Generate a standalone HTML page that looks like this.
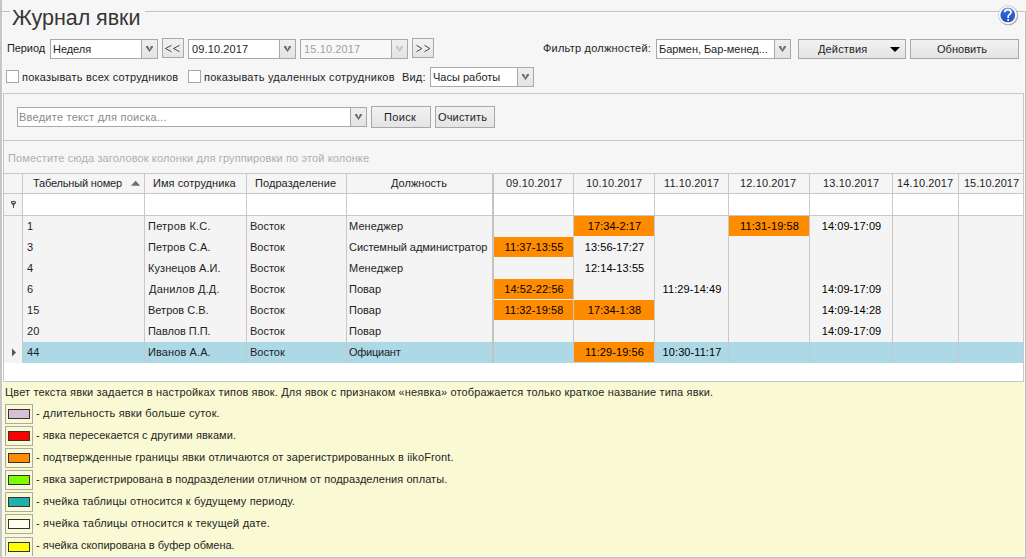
<!DOCTYPE html>
<html><head><meta charset="utf-8"><title>Журнал явки</title>
<style>
*{margin:0;padding:0;box-sizing:border-box}
html,body{width:1026px;height:558px;overflow:hidden;background:#f6f6f6;font-family:"Liberation Sans",sans-serif;font-size:11px;color:#1e1e1e}
.a{position:absolute}
.t{position:absolute;white-space:nowrap;font-size:11px;line-height:11px;letter-spacing:0.15px}
</style></head><body>
<div class="a" style="left:0px;top:0px;width:2px;height:558px;background:#c6c6c6"></div>
<div class="a" style="left:2px;top:12px;width:1px;height:545px;background:#fafafa"></div>
<div class="a" style="left:1px;top:11px;width:9px;height:1px;background:#c0c0c0"></div>
<div class="a" style="left:145px;top:11px;width:881px;height:1px;background:#c0c0c0"></div>
<div class="a" style="left:3px;top:12px;width:7px;height:1px;background:#fafafa"></div>
<div class="a" style="left:145px;top:12px;width:879px;height:1px;background:#fafafa"></div>
<div class="a" style="left:1025px;top:11px;width:1px;height:547px;background:#c0c0c0"></div>
<div class="a" style="left:1024px;top:12px;width:1px;height:545px;background:#fafafa"></div>
<div class="a" style="left:0px;top:557px;width:1026px;height:1px;background:#c0c0c0"></div>
<div class="a" style="left:2px;top:556px;width:1023px;height:1px;background:#fafafa"></div>
<div class="a" style="left:12px;top:7px;font-size:21.5px;line-height:22px;letter-spacing:-0.05px;color:#363636;white-space:nowrap">Журнал явки</div>
<svg class="a" style="left:997px;top:3px" width="24" height="24" viewBox="0 0 24 24">
<defs><linearGradient id="hg" x1="0" y1="0" x2="0" y2="1"><stop offset="0" stop-color="#6a9cec"/><stop offset="0.35" stop-color="#2f63d2"/><stop offset="1" stop-color="#2352c0"/></linearGradient></defs>
<circle cx="11.4" cy="12.5" r="9.8" fill="#6e6e6e" opacity="0.55"/>
<circle cx="10.8" cy="11.9" r="9.6" fill="#c8c8c8"/>
<circle cx="10.8" cy="11.9" r="9.0" fill="#ffffff"/>
<circle cx="10.8" cy="11.9" r="7.4" fill="url(#hg)"/>
<path d="M7.7 9.3 C7.7 7.4 9.1 6.6 10.8 6.6 C12.6 6.6 14 7.6 14 9.2 C14 11.1 11.5 11.5 11.2 13.3 L11.2 14.9" fill="none" stroke="#fff" stroke-width="1.7"/>
<rect x="10.3" y="16.1" width="1.8" height="1.8" fill="#fff"/>
</svg>
<div class="t" style="left:7px;top:43px;letter-spacing:-0.1px;">Период</div>
<div class="a" style="left:50px;top:39px;width:108px;height:20px;border:1px solid #a8a8a8;background:#fff"></div>
<div class="a" style="left:141px;top:40px;width:16px;height:18px;border-left:1px solid #a8a8a8;background:linear-gradient(#efefef,#e3e3e3)"></div>
<svg class="a" width="7" height="6" viewBox="0 0 7 6" style="left:146px;top:46px"><path d="M0 0 L2.1 0 L3.5 3.5 L4.9 0 L7 0 L7 1.2 L3.5 6 L0 1.2 Z" fill="#6e6e6e"/></svg>
<div class="t" style="left:53px;top:44px;letter-spacing:-0.05px;">Неделя</div>
<div class="a" style="left:162px;top:38px;width:22px;height:20px;border:1px solid #a8a8a8;background:linear-gradient(#f2f2f2,#e4e4e4)"></div>
<svg class="a" style="left:162px;top:38px" width="22" height="20" viewBox="0 0 22 20"><path d="M9.5 7.3 L3.5 10.5 L9.5 13.7 M17.5 7.3 L11.5 10.5 L17.5 13.7" fill="none" stroke="#2a2a2a" stroke-width="0.85"/></svg>
<div class="a" style="left:188px;top:39px;width:108px;height:20px;border:1px solid #a8a8a8;background:#fff"></div>
<div class="a" style="left:279px;top:40px;width:16px;height:18px;border-left:1px solid #a8a8a8;background:linear-gradient(#efefef,#e3e3e3)"></div>
<svg class="a" width="7" height="6" viewBox="0 0 7 6" style="left:284px;top:46px"><path d="M0 0 L2.1 0 L3.5 3.5 L4.9 0 L7 0 L7 1.2 L3.5 6 L0 1.2 Z" fill="#6e6e6e"/></svg>
<div class="t" style="left:192px;top:44px;letter-spacing:0.125px;">09.10.2017</div>
<div class="a" style="left:300px;top:39px;width:108px;height:20px;border:1px solid #a8a8a8;background:#f8f8f8"></div>
<div class="a" style="left:391px;top:40px;width:16px;height:18px;border-left:1px solid #a8a8a8;background:linear-gradient(#efefef,#e3e3e3)"></div>
<svg class="a" width="7" height="6" viewBox="0 0 7 6" style="left:396px;top:46px"><path d="M0 0 L2.1 0 L3.5 3.5 L4.9 0 L7 0 L7 1.2 L3.5 6 L0 1.2 Z" fill="#c4c4c4"/></svg>
<div class="t" style="left:304px;top:44px;letter-spacing:0.125px;color:#a0a0a0">15.10.2017</div>
<div class="a" style="left:412px;top:38px;width:22px;height:20px;border:1px solid #a8a8a8;background:linear-gradient(#f2f2f2,#e4e4e4)"></div>
<svg class="a" style="left:412px;top:38px" width="22" height="20" viewBox="0 0 22 20"><path d="M4.5 7.3 L9.8 10.5 L4.5 13.7 M12.5 7.3 L17.8 10.5 L12.5 13.7" fill="none" stroke="#2a2a2a" stroke-width="0.85"/></svg>
<div class="t" style="left:543px;top:43px;letter-spacing:0.225px;">Фильтр должностей:</div>
<div class="a" style="left:656px;top:39px;width:135px;height:20px;border:1px solid #a8a8a8;background:#fff"></div>
<div class="a" style="left:774px;top:40px;width:16px;height:18px;border-left:1px solid #a8a8a8;background:linear-gradient(#efefef,#e3e3e3)"></div>
<svg class="a" width="7" height="6" viewBox="0 0 7 6" style="left:779px;top:46px"><path d="M0 0 L2.1 0 L3.5 3.5 L4.9 0 L7 0 L7 1.2 L3.5 6 L0 1.2 Z" fill="#6e6e6e"/></svg>
<div class="t" style="left:659px;top:44px;letter-spacing:-0.05px;">Бармен, Бар-менед...</div>
<div class="a" style="left:798px;top:39px;width:108px;height:20px;border:1px solid #a8a8a8;background:linear-gradient(#f2f2f2,#e4e4e4)"></div>
<div class="t" style="left:818px;top:44px;letter-spacing:0.15px;">Действия</div>
<svg class="a" style="left:889px;top:46px" width="12" height="7" viewBox="0 0 12 7"><path d="M1 1 L11 1 L6 6 Z" fill="#000"/></svg>
<div class="a" style="left:910px;top:39px;width:109px;height:20px;border:1px solid #a8a8a8;background:linear-gradient(#f2f2f2,#e4e4e4)"></div>
<div class="t" style="left:937px;top:44px;letter-spacing:0.025px;">Обновить</div>
<div class="a" style="left:6px;top:70px;width:13px;height:13px;border:1px solid #a8a8a8;background:#fff"></div>
<div class="t" style="left:22px;top:72px;letter-spacing:0.225px;">показывать всех сотрудников</div>
<div class="a" style="left:188px;top:70px;width:13px;height:13px;border:1px solid #a8a8a8;background:#fff"></div>
<div class="t" style="left:204px;top:72px;letter-spacing:0.225px;">показывать удаленных сотрудников</div>
<div class="t" style="left:402px;top:72px;letter-spacing:0.175px;">Вид:</div>
<div class="a" style="left:430px;top:67px;width:104px;height:20px;border:1px solid #a8a8a8;background:#fff"></div>
<div class="a" style="left:517px;top:68px;width:16px;height:18px;border-left:1px solid #a8a8a8;background:linear-gradient(#efefef,#e3e3e3)"></div>
<svg class="a" width="7" height="6" viewBox="0 0 7 6" style="left:522px;top:74px"><path d="M0 0 L2.1 0 L3.5 3.5 L4.9 0 L7 0 L7 1.2 L3.5 6 L0 1.2 Z" fill="#6e6e6e"/></svg>
<div class="t" style="left:433px;top:72px;letter-spacing:0.0px;">Часы работы</div>
<div class="a" style="left:3px;top:93px;width:1021px;height:48px;border:1px solid #c8c8c8;background:#f6f6f6"></div>
<div class="a" style="left:17px;top:107px;width:350px;height:20px;border:1px solid #a8a8a8;background:#fff"></div>
<div class="a" style="left:350px;top:108px;width:16px;height:18px;border-left:1px solid #a8a8a8;background:linear-gradient(#efefef,#e3e3e3)"></div>
<svg class="a" width="7" height="6" viewBox="0 0 7 6" style="left:355px;top:114px"><path d="M0 0 L2.1 0 L3.5 3.5 L4.9 0 L7 0 L7 1.2 L3.5 6 L0 1.2 Z" fill="#6e6e6e"/></svg>
<div class="t" style="left:19px;top:112px;letter-spacing:0.25px;color:#8a8a8a">Введите текст для поиска...</div>
<div class="a" style="left:371px;top:106px;width:60px;height:22px;border:1px solid #a8a8a8;background:linear-gradient(#f2f2f2,#e4e4e4)"></div>
<div class="t" style="left:384px;top:112px;letter-spacing:0.325px;">Поиск</div>
<div class="a" style="left:435px;top:106px;width:60px;height:22px;border:1px solid #a8a8a8;background:linear-gradient(#f2f2f2,#e4e4e4)"></div>
<div class="t" style="left:438px;top:112px;letter-spacing:0.15px;">Очистить</div>
<div class="a" style="left:3px;top:141px;width:1px;height:32px;background:#c8c8c8"></div>
<div class="a" style="left:1023px;top:141px;width:1px;height:32px;background:#c8c8c8"></div>
<div class="t" style="left:8px;top:153px;letter-spacing:0.125px;color:#acaeb4">Поместите сюда заголовок колонки для группировки по этой колонке</div>
<div class="a" style="left:3px;top:173px;width:1021px;height:209px;border:1px solid #c8c8c8;background:#fff"></div>
<div class="a" style="left:4px;top:174px;width:1019px;height:19px;background:#f5f5f5"></div>
<div class="a" style="left:4px;top:193px;width:1019px;height:1px;background:#c8c8c8"></div>
<div class="a" style="left:4px;top:194px;width:18px;height:21px;background:#f5f5f5"></div>
<div class="a" style="left:4px;top:215px;width:1019px;height:1px;background:#c8c8c8"></div>
<div class="a" style="left:4px;top:216px;width:1019px;height:147px;background:#f4f4f4"></div>
<div class="a" style="left:23px;top:342px;width:1000px;height:21px;background:#add8e6"></div>
<div class="a" style="left:574px;top:216px;width:80px;height:20px;background:#ff8c00"></div>
<div class="a" style="left:729px;top:216px;width:80px;height:20px;background:#ff8c00"></div>
<div class="a" style="left:494px;top:237px;width:79px;height:20px;background:#ff8c00"></div>
<div class="a" style="left:494px;top:279px;width:79px;height:20px;background:#ff8c00"></div>
<div class="a" style="left:494px;top:300px;width:79px;height:20px;background:#ff8c00"></div>
<div class="a" style="left:574px;top:300px;width:80px;height:20px;background:#ff8c00"></div>
<div class="a" style="left:574px;top:342px;width:80px;height:20px;background:#ff8c00"></div>
<div class="t" style="left:27px;top:221px;">1</div>
<div class="t" style="left:148px;top:221px;letter-spacing:0.225px;">Петров К.С.</div>
<div class="t" style="left:250px;top:221px;letter-spacing:0.0px;">Восток</div>
<div class="t" style="left:349px;top:221px;letter-spacing:0.1px;">Менеджер</div>
<div class="t" style="left:574.5px;width:80.0px;text-align:center;top:221px;letter-spacing:0.08px;color:#000">17:34-2:17</div>
<div class="t" style="left:729.5px;width:80.0px;text-align:center;top:221px;letter-spacing:0.08px;color:#000">11:31-19:58</div>
<div class="t" style="left:810.5px;width:82.0px;text-align:center;top:221px;letter-spacing:0.08px;color:#000">14:09-17:09</div>
<div class="t" style="left:27px;top:242px;">3</div>
<div class="t" style="left:148px;top:242px;letter-spacing:0.125px;">Петров С.А.</div>
<div class="t" style="left:250px;top:242px;letter-spacing:0.0px;">Восток</div>
<div class="t" style="left:349px;top:242px;letter-spacing:-0.05px;">Системный администратор</div>
<div class="t" style="left:494.5px;width:79.0px;text-align:center;top:242px;letter-spacing:0.08px;color:#000">11:37-13:55</div>
<div class="t" style="left:574.5px;width:80.0px;text-align:center;top:242px;letter-spacing:0.08px;color:#000">13:56-17:27</div>
<div class="t" style="left:27px;top:263px;">4</div>
<div class="t" style="left:148px;top:263px;letter-spacing:0.075px;">Кузнецов А.И.</div>
<div class="t" style="left:250px;top:263px;letter-spacing:0.0px;">Восток</div>
<div class="t" style="left:349px;top:263px;letter-spacing:0.1px;">Менеджер</div>
<div class="t" style="left:574.5px;width:80.0px;text-align:center;top:263px;letter-spacing:0.08px;color:#000">12:14-13:55</div>
<div class="t" style="left:27px;top:284px;">6</div>
<div class="t" style="left:149px;top:284px;letter-spacing:0.2px;">Данилов Д.Д.</div>
<div class="t" style="left:250px;top:284px;letter-spacing:0.0px;">Восток</div>
<div class="t" style="left:349px;top:284px;letter-spacing:0.025px;">Повар</div>
<div class="t" style="left:494.5px;width:79.0px;text-align:center;top:284px;letter-spacing:0.08px;color:#000">14:52-22:56</div>
<div class="t" style="left:655.5px;width:73.0px;text-align:center;top:284px;letter-spacing:0.08px;color:#000">11:29-14:49</div>
<div class="t" style="left:810.5px;width:82.0px;text-align:center;top:284px;letter-spacing:0.08px;color:#000">14:09-17:09</div>
<div class="t" style="left:27px;top:305px;">15</div>
<div class="t" style="left:148px;top:305px;letter-spacing:0.0px;">Ветров С.В.</div>
<div class="t" style="left:250px;top:305px;letter-spacing:0.0px;">Восток</div>
<div class="t" style="left:349px;top:305px;letter-spacing:0.025px;">Повар</div>
<div class="t" style="left:494.5px;width:79.0px;text-align:center;top:305px;letter-spacing:0.08px;color:#000">11:32-19:58</div>
<div class="t" style="left:574.5px;width:80.0px;text-align:center;top:305px;letter-spacing:0.08px;color:#000">17:34-1:38</div>
<div class="t" style="left:810.5px;width:82.0px;text-align:center;top:305px;letter-spacing:0.08px;color:#000">14:09-14:28</div>
<div class="t" style="left:27px;top:326px;">20</div>
<div class="t" style="left:148px;top:326px;letter-spacing:-0.05px;">Павлов П.П.</div>
<div class="t" style="left:250px;top:326px;letter-spacing:0.0px;">Восток</div>
<div class="t" style="left:349px;top:326px;letter-spacing:0.025px;">Повар</div>
<div class="t" style="left:810.5px;width:82.0px;text-align:center;top:326px;letter-spacing:0.08px;color:#000">14:09-17:09</div>
<div class="t" style="left:27px;top:347px;">44</div>
<div class="t" style="left:148px;top:347px;letter-spacing:0.1px;">Иванов А.А.</div>
<div class="t" style="left:250px;top:347px;letter-spacing:0.0px;">Восток</div>
<div class="t" style="left:349px;top:347px;letter-spacing:-0.25px;">Официант</div>
<div class="t" style="left:574.5px;width:80.0px;text-align:center;top:347px;letter-spacing:0.08px;color:#000">11:29-19:56</div>
<div class="t" style="left:655.5px;width:73.0px;text-align:center;top:347px;letter-spacing:0.08px;color:#000">10:30-11:17</div>
<div class="a" style="left:22px;top:174px;width:1px;height:189px;background:#c8c8c8"></div>
<div class="a" style="left:144px;top:174px;width:1px;height:189px;background:#c8c8c8"></div>
<div class="a" style="left:246px;top:174px;width:1px;height:189px;background:#c8c8c8"></div>
<div class="a" style="left:346px;top:174px;width:1px;height:189px;background:#c8c8c8"></div>
<div class="a" style="left:573px;top:174px;width:1px;height:189px;background:#c8c8c8"></div>
<div class="a" style="left:654px;top:174px;width:1px;height:189px;background:#c8c8c8"></div>
<div class="a" style="left:728px;top:174px;width:1px;height:189px;background:#c8c8c8"></div>
<div class="a" style="left:809px;top:174px;width:1px;height:189px;background:#c8c8c8"></div>
<div class="a" style="left:892px;top:174px;width:1px;height:189px;background:#c8c8c8"></div>
<div class="a" style="left:958px;top:174px;width:1px;height:189px;background:#c8c8c8"></div>
<div class="a" style="left:492px;top:174px;width:2px;height:189px;background:#c4c4c4"></div>
<svg class="a" style="left:11px;top:348px" width="6" height="9" viewBox="0 0 6 9"><path d="M1 0.5 L5 4.5 L1 8.5 Z" fill="#555"/></svg>
<svg class="a" style="left:9px;top:199px" width="9" height="10" viewBox="0 0 9 10"><path d="M2.4 3.6 L6.6 3.6 L5.1 6.6 L3.9 6.6 Z" fill="#4a4a4a"/><ellipse cx="4.5" cy="3.4" rx="2.1" ry="1.2" fill="#cfcfcf" stroke="#4a4a4a" stroke-width="1.1"/><rect x="4" y="6" width="1" height="2.9" fill="#4a4a4a"/></svg>
<div class="t" style="left:33px;top:178px;letter-spacing:-0.175px;">Табельный номер</div>
<svg class="a" style="left:130px;top:180px" width="11" height="7" viewBox="0 0 11 7"><path d="M1 5.8 L5.6 0.7 L10.2 5.8 Z" fill="#707070"/></svg>
<div class="t" style="left:153px;top:178px;letter-spacing:0.05px;">Имя сотрудника</div>
<div class="t" style="left:255px;top:178px;letter-spacing:0.075px;">Подразделение</div>
<div class="t" style="left:391px;top:178px;letter-spacing:0.025px;">Должность</div>
<div class="t" style="left:506px;top:178px;letter-spacing:0.125px;">09.10.2017</div>
<div class="t" style="left:586px;top:178px;letter-spacing:0.125px;">10.10.2017</div>
<div class="t" style="left:664px;top:178px;letter-spacing:0.1px;">11.10.2017</div>
<div class="t" style="left:740px;top:178px;letter-spacing:0.125px;">12.10.2017</div>
<div class="t" style="left:823px;top:178px;letter-spacing:0.125px;">13.10.2017</div>
<div class="t" style="left:897px;top:178px;letter-spacing:0.125px;">14.10.2017</div>
<div class="t" style="left:964px;top:178px;letter-spacing:0.0px;">15.10.2017</div>
<div class="a" style="left:3px;top:382px;width:1021px;height:174px;background:#f9f9d3"></div>
<div class="t" style="left:5px;top:387px;letter-spacing:0.15px;">Цвет текста явки задается в настройках типов явок. Для явок с признаком «неявка» отображается только краткое название типа явки.</div>
<div class="a" style="left:5px;top:404px;width:28px;height:20px;border:1px solid #aaa"></div>
<div class="a" style="left:8px;top:409px;width:22px;height:10px;border:1px solid #333;background:#d8bfd8"></div>
<div class="t" style="left:36px;top:408px;letter-spacing:0.175px;">- длительность явки больше суток.</div>
<div class="a" style="left:5px;top:426px;width:28px;height:20px;border:1px solid #aaa"></div>
<div class="a" style="left:8px;top:431px;width:22px;height:10px;border:1px solid #333;background:#ff0000"></div>
<div class="t" style="left:36px;top:430px;letter-spacing:0.05px;">- явка пересекается с другими явками.</div>
<div class="a" style="left:5px;top:448px;width:28px;height:20px;border:1px solid #aaa"></div>
<div class="a" style="left:8px;top:453px;width:22px;height:10px;border:1px solid #333;background:#ff8c00"></div>
<div class="t" style="left:36px;top:452px;letter-spacing:0.125px;">- подтвержденные границы явки отличаются от зарегистрированных в iikoFront.</div>
<div class="a" style="left:5px;top:470px;width:28px;height:20px;border:1px solid #aaa"></div>
<div class="a" style="left:8px;top:475px;width:22px;height:10px;border:1px solid #333;background:#7cfc00"></div>
<div class="t" style="left:36px;top:474px;letter-spacing:0.075px;">- явка зарегистрирована в подразделении отличном от подразделения оплаты.</div>
<div class="a" style="left:5px;top:492px;width:28px;height:20px;border:1px solid #aaa"></div>
<div class="a" style="left:8px;top:497px;width:22px;height:10px;border:1px solid #333;background:#20b2aa"></div>
<div class="t" style="left:36px;top:496px;letter-spacing:0.15px;">- ячейка таблицы относится к будущему периоду.</div>
<div class="a" style="left:5px;top:514px;width:28px;height:20px;border:1px solid #aaa"></div>
<div class="a" style="left:8px;top:519px;width:22px;height:10px;border:1px solid #333;background:#fffff0"></div>
<div class="t" style="left:36px;top:518px;letter-spacing:0.2px;">- ячейка таблицы относится к текущей дате.</div>
<div class="a" style="left:5px;top:537px;width:28px;height:19px;border:1px solid #aaa;border-bottom:none"></div>
<div class="a" style="left:8px;top:542px;width:22px;height:10px;border:1px solid #333;background:#ffff00"></div>
<div class="t" style="left:36px;top:540px;letter-spacing:0.0px;">- ячейка скопирована в буфер обмена.</div>
</body></html>
